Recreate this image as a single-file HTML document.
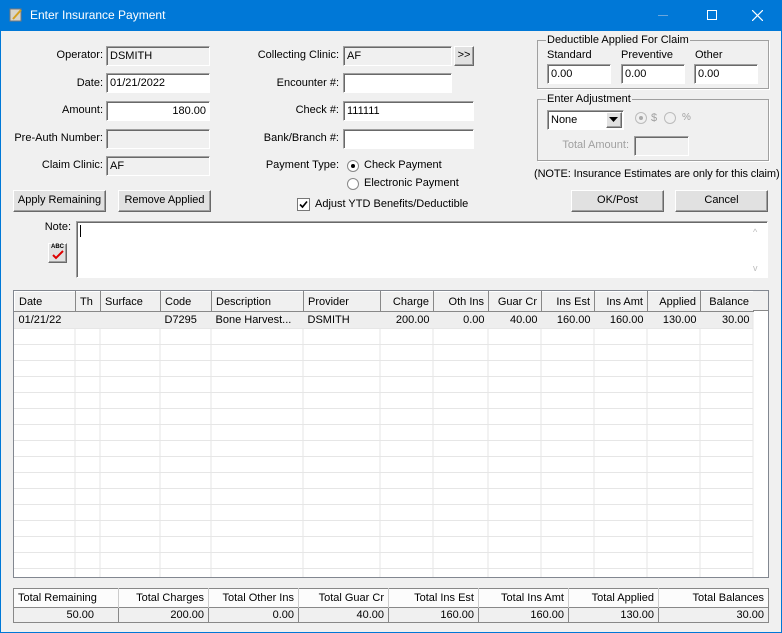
<!DOCTYPE html>
<html><head><meta charset="utf-8"><style>
*{box-sizing:border-box;margin:0;padding:0}
body{width:782px;height:633px;background:#f0f0f0;font-family:"Liberation Sans",Arial,sans-serif;font-size:11px;color:#000;position:relative;overflow:hidden}
.a{position:absolute;white-space:nowrap}
.r{text-align:right}
.in{position:absolute;background:#fff;border:1px solid;border-color:#a0a0a0 #fff #fff #a0a0a0;box-shadow:inset 1px 1px 0 #696969;padding:3px 3px;line-height:13px;height:20px}
.g{background:#f0f0f0}
.btn{position:absolute;background:#e1e1e1;border:1px solid;border-color:#fff #696969 #696969 #fff;box-shadow:inset -1px -1px 0 #a0a0a0;text-align:center;line-height:19px}
.grp{position:absolute;border:1px solid #a0a0a0;box-shadow:1px 1px 0 #fff}
.leg{position:absolute;background:#f0f0f0;padding:0 1px;top:-8px;left:8px;line-height:14px}
table{border-collapse:collapse;position:absolute;table-layout:fixed}
td{white-space:nowrap;overflow:hidden;padding:0 4px}
</style></head><body>
<div class="a" style="left:0;top:0;width:782px;height:31px;background:#0078d7"></div>
<div class="a" style="left:0;top:31px;width:1px;height:602px;background:#0078d7"></div>
<div class="a" style="left:781px;top:31px;width:1px;height:602px;background:#0078d7"></div>
<div class="a" style="left:0;top:632px;width:782px;height:1px;background:#0078d7"></div>
<svg class="a" style="left:9px;top:8px" width="14" height="14"><rect x="1" y="1" width="11" height="12" fill="#d8d4c8" stroke="#777"/><path d="M4 11 L12 2" stroke="#d4a020" stroke-width="2"/></svg>
<div class="a" style="left:30px;top:8px;color:#fff;font-size:12px">Enter Insurance Payment</div>
<div class="a" style="left:658px;top:15px;width:10px;height:1px;background:#6aa6dc"></div>
<div class="a" style="left:707px;top:10px;width:10px;height:10px;border:1px solid #fff"></div>
<svg class="a" style="left:752px;top:10px" width="11" height="11"><path d="M0 0L11 11M11 0L0 11" stroke="#fff" stroke-width="1.2"/></svg>

<div class="a r" style="right:679px;top:49px">Operator:</div>
<div class="in g" style="left:106px;top:46px;width:104px">DSMITH</div>
<div class="a r" style="right:679px;top:77px">Date:</div>
<div class="in" style="left:106px;top:73px;width:104px">01/21/2022</div>
<div class="a r" style="right:679px;top:104px">Amount:</div>
<div class="in r" style="left:106px;top:101px;width:104px">180.00</div>
<div class="a r" style="right:679px;top:132px">Pre-Auth Number:</div>
<div class="in g" style="left:106px;top:129px;width:104px"></div>
<div class="a r" style="right:679px;top:159px">Claim Clinic:</div>
<div class="in g" style="left:106px;top:156px;width:104px">AF</div>
<div class="btn" style="left:13px;top:190px;width:93px;height:22px">Apply Remaining</div>
<div class="btn" style="left:118px;top:190px;width:93px;height:22px">Remove Applied</div>

<div class="a r" style="right:443px;top:49px">Collecting Clinic:</div>
<div class="in g" style="left:343px;top:46px;width:109px">AF</div>
<div class="btn" style="left:454px;top:46px;width:20px;height:20px;line-height:17px">&gt;&gt;</div>
<div class="a r" style="right:443px;top:77px">Encounter #:</div>
<div class="in" style="left:343px;top:73px;width:109px"></div>
<div class="a r" style="right:443px;top:104px">Check #:</div>
<div class="in" style="left:343px;top:101px;width:131px">111111</div>
<div class="a r" style="right:443px;top:132px">Bank/Branch #:</div>
<div class="in" style="left:343px;top:129px;width:131px"></div>
<div class="a r" style="right:443px;top:159px">Payment Type:</div>
<svg class="a" style="left:347px;top:160px" width="12" height="12"><circle cx="6" cy="6" r="5.5" fill="#fff" stroke="#888"/><circle cx="6" cy="6" r="2" fill="#000"/></svg>
<div class="a" style="left:364px;top:159px">Check Payment</div>
<svg class="a" style="left:347px;top:178px" width="12" height="12"><circle cx="6" cy="6" r="5.5" fill="#fff" stroke="#888"/></svg>
<div class="a" style="left:364px;top:177px">Electronic Payment</div>
<svg class="a" style="left:297px;top:198px" width="13" height="13"><rect x="0.5" y="0.5" width="12" height="12" fill="#fff" stroke="#777"/><path d="M3 6.5L5.5 9L10 3.5" stroke="#000" stroke-width="1.6" fill="none"/></svg>
<div class="a" style="left:315px;top:198px">Adjust YTD Benefits/Deductible</div>

<div class="grp" style="left:537px;top:40px;width:232px;height:49px"><div class="leg">Deductible Applied For Claim</div></div>
<div class="a" style="left:547px;top:49px">Standard</div>
<div class="a" style="left:621px;top:49px">Preventive</div>
<div class="a" style="left:695px;top:49px">Other</div>
<div class="in" style="left:547px;top:64px;width:64px">0.00</div>
<div class="in" style="left:621px;top:64px;width:64px">0.00</div>
<div class="in" style="left:694px;top:64px;width:64px">0.00</div>
<div class="grp" style="left:537px;top:99px;width:232px;height:62px"><div class="leg">Enter Adjustment</div></div>
<div class="in" style="left:547px;top:110px;width:77px">None</div>
<div class="btn" style="left:606px;top:112px;width:16px;height:16px"></div>
<svg class="a" style="left:609px;top:117px" width="9" height="5"><path d="M0 0H9L4.5 5Z" fill="#000"/></svg>
<svg class="a" style="left:635px;top:112px" width="12" height="12"><circle cx="6" cy="6" r="5.5" fill="#f0f0f0" stroke="#bbb"/><circle cx="6" cy="6" r="2" fill="#aaa"/></svg>
<div class="a" style="left:651px;top:112px;color:#a0a0a0">$</div>
<svg class="a" style="left:664px;top:112px" width="12" height="12"><circle cx="6" cy="6" r="5.5" fill="#f0f0f0" stroke="#bbb"/></svg>
<div class="a" style="left:682px;top:112px;color:#a0a0a0;font-size:10px">%</div>
<div class="a r" style="right:153px;top:139px;color:#a0a0a0">Total Amount:</div>
<div class="in g" style="left:634px;top:136px;width:55px"></div>
<div class="a" style="left:534px;top:168px;letter-spacing:-0.1px">(NOTE: Insurance Estimates are only for this claim)</div>
<div class="btn" style="left:571px;top:190px;width:93px;height:22px">OK/Post</div>
<div class="btn" style="left:675px;top:190px;width:93px;height:22px">Cancel</div>

<div class="a r" style="right:711px;top:221px">Note:</div>
<div class="btn" style="left:48px;top:243px;width:19px;height:20px"></div>
<div class="a" style="left:51px;top:244px;font-size:6px;font-weight:bold">ABC</div>
<svg class="a" style="left:52px;top:250px" width="12" height="10"><path d="M1 5L4 8L11 1" stroke="#d00" stroke-width="2" fill="none"/></svg>
<div class="in" style="left:76px;top:221px;width:692px;height:57px;padding:0"><div class="a" style="left:3px;top:3px;width:1px;height:12px;background:#000"></div><div class="a" style="left:676px;top:4px;color:#bbb;font-size:9px">^</div><div class="a" style="left:676px;top:40px;color:#bbb;font-size:9px">v</div></div>

<div class="a" style="left:13px;top:290px;width:756px;height:288px;background:#fff;border:1px solid #828790;overflow:hidden">
<div class="a" style="left:0;top:20px;width:739px;height:17px;background:#eee"></div>
<svg class="a" style="left:0;top:0" width="754" height="286">
<g stroke="#e6e6e6">
<path d="M61 37V286M86 37V286M146 37V286M197 37V286M289 37V286M366 37V286M419 37V286M474 37V286M527 37V286M580 37V286M633 37V286M686 37V286M739 0V286"/>
<path d="M0 37.5H739M0 53.5H739M0 69.5H739M0 85.5H739M0 101.5H739M0 117.5H739M0 133.5H739M0 149.5H739M0 165.5H739M0 181.5H739M0 197.5H739M0 213.5H739M0 229.5H739M0 245.5H739M0 261.5H739M0 277.5H739"/>
</g></svg>
<table style="left:0;top:0;width:739px">
<colgroup><col style="width:61px"><col style="width:25px"><col style="width:60px"><col style="width:51px"><col style="width:92px"><col style="width:77px"><col style="width:53px"><col style="width:55px"><col style="width:53px"><col style="width:53px"><col style="width:53px"><col style="width:53px"><col style="width:53px"></colgroup>
<tr style="height:20px;background:#f0f0f0">
<td style="border:1px solid;border-color:#fff #888 #888 #fff">Date</td><td style="border:1px solid;border-color:#fff #888 #888 #fff">Th</td><td style="border:1px solid;border-color:#fff #888 #888 #fff">Surface</td><td style="border:1px solid;border-color:#fff #888 #888 #fff">Code</td><td style="border:1px solid;border-color:#fff #888 #888 #fff">Description</td><td style="border:1px solid;border-color:#fff #888 #888 #fff">Provider</td><td class="r" style="border:1px solid;border-color:#fff #888 #888 #fff">Charge</td><td class="r" style="border:1px solid;border-color:#fff #888 #888 #fff">Oth Ins</td><td class="r" style="border:1px solid;border-color:#fff #888 #888 #fff">Guar Cr</td><td class="r" style="border:1px solid;border-color:#fff #888 #888 #fff">Ins Est</td><td class="r" style="border:1px solid;border-color:#fff #888 #888 #fff">Ins Amt</td><td class="r" style="border:1px solid;border-color:#fff #888 #888 #fff">Applied</td><td class="r" style="border:1px solid;border-color:#fff #888 #888 #fff">Balance</td></tr>
<tr style="height:17px"><td>01/21/22</td><td></td><td></td><td>D7295</td><td>Bone Harvest...</td><td>DSMITH</td><td class="r">200.00</td><td class="r">0.00</td><td class="r">40.00</td><td class="r">160.00</td><td class="r">160.00</td><td class="r">130.00</td><td class="r">30.00</td></tr>
</table>
<div class="a" style="left:739px;top:0;width:15px;height:20px;background:#f0f0f0;border-bottom:1px solid #888"></div>
</div>

<table style="left:13px;top:588px;width:756px;border:1px solid #888">
<colgroup><col style="width:105px"><col style="width:90px"><col style="width:90px"><col style="width:90px"><col style="width:90px"><col style="width:90px"><col style="width:90px"><col style="width:110px"></colgroup>
<tr style="height:19px;background:#fcfcfc"><td style="border-right:1px solid #ccc">Total Remaining</td><td class="r" style="border-right:1px solid #ccc">Total Charges</td><td class="r" style="border-right:1px solid #ccc">Total Other Ins</td><td class="r" style="border-right:1px solid #ccc">Total Guar Cr</td><td class="r" style="border-right:1px solid #ccc">Total Ins Est</td><td class="r" style="border-right:1px solid #ccc">Total Ins Amt</td><td class="r" style="border-right:1px solid #ccc">Total Applied</td><td class="r">Total Balances</td></tr>
<tr style="height:15px;background:#f0f0f0;border-top:1px solid #888"><td class="r" style="padding-right:24px;border-right:1px solid #888">50.00</td><td class="r" style="border-right:1px solid #888">200.00</td><td class="r" style="border-right:1px solid #888">0.00</td><td class="r" style="border-right:1px solid #888">40.00</td><td class="r" style="border-right:1px solid #888">160.00</td><td class="r" style="border-right:1px solid #888">160.00</td><td class="r" style="border-right:1px solid #888">130.00</td><td class="r">30.00</td></tr>
</table>
</body></html>
